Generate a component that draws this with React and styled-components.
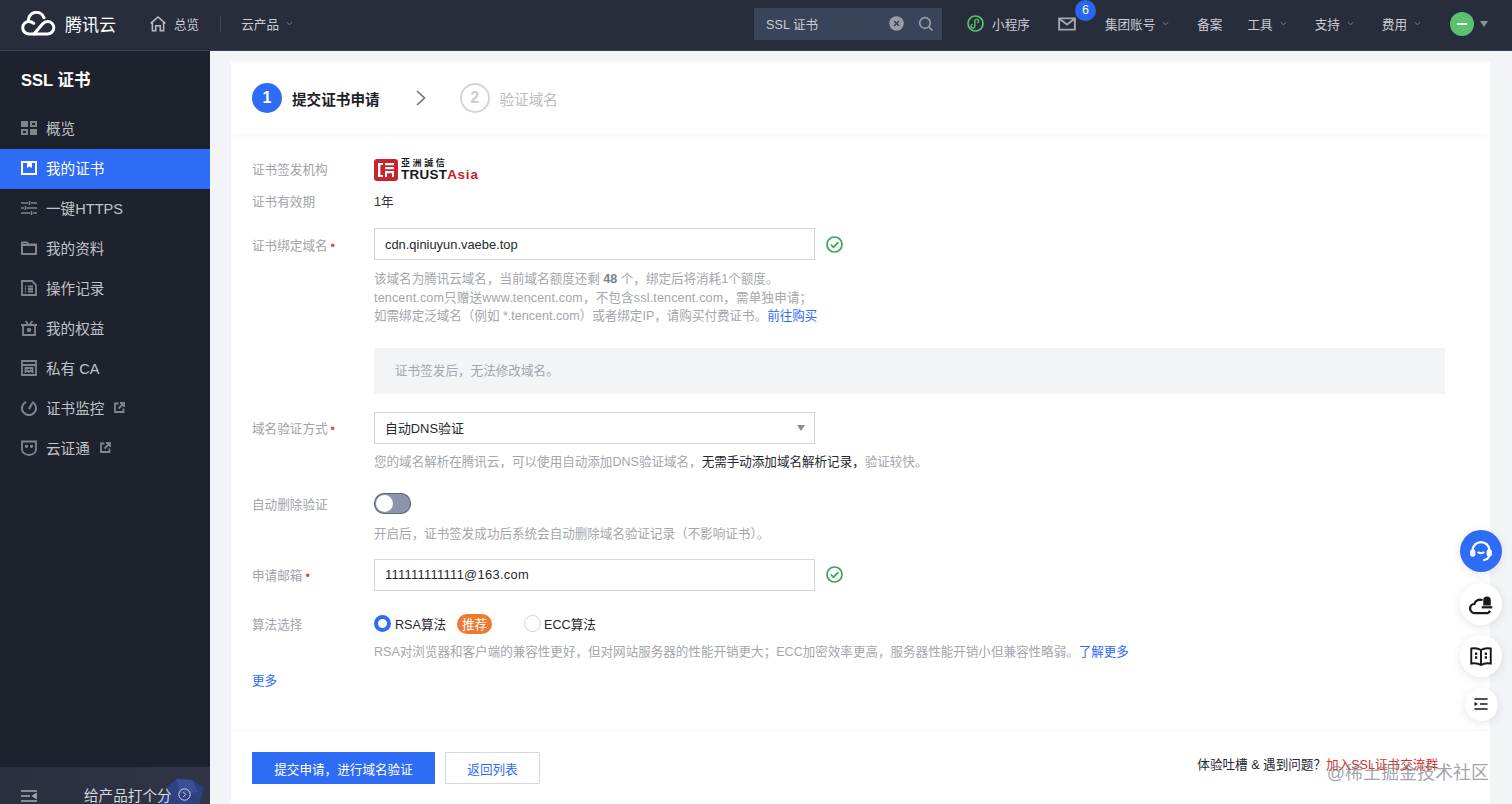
import styled, { createGlobalStyle } from "styled-components";

const GlobalStyle = createGlobalStyle`
  html, body {
    margin: 0;
    height: 100%;
    overflow: hidden;
    font-family: "Liberation Sans", "Noto Sans CJK SC", sans-serif;
  }
  * { box-sizing: border-box; }
`;

const Page = styled.div`
  width: 100%;
  height: 100vh;
  display: flex;
  flex-direction: column;
  overflow: hidden;
  background: #f3f4f7;
`;

/* top bar */
const TopBar = styled.header`
  flex: none;
  height: 51px;
  padding-bottom: 3px;
  display: flex;
  align-items: center;
  padding-left: 21px;
  background: #282d3b;
  border-bottom: 1px solid #3b4050;
  color: #c9ccd2;
  font-size: 12.6px;
`;

const Brand = styled.div`
  display: flex;
  align-items: center;
  gap: 9px;
  width: 128px;
  color: #fff;
  font-size: 17px;
`;

const NavItem = styled.div`
  display: flex;
  align-items: center;
  flex: none;
  gap: ${(p) => p.$gap ?? 7}px;
  margin-left: ${(p) => p.$left ?? 0}px;
  white-space: nowrap;
`;

const NavDivider = styled.span`
  width: 1px;
  height: 16px;
  margin-left: 21px;
  background: #454a58;
`;

const NavRight = styled.div`
  display: flex;
  align-items: center;
  margin-left: auto;
  padding-right: 24px;
`;

const SearchBox = styled.div`
  width: 188px;
  height: 32px;
  display: flex;
  align-items: center;
  padding: 0 8px 0 12px;
  background: #39435a;
  color: #c9ccd2;
  span { flex: 1; }
  svg + svg { margin-left: 14px; }
`;

const MailWrap = styled.div`
  position: relative;
  display: flex;
  margin-left: 28px;
`;

const Badge = styled.span`
  position: absolute;
  left: 17px;
  top: -15px;
  width: 21px;
  height: 21px;
  border-radius: 50%;
  display: flex;
  align-items: center;
  justify-content: center;
  background: #2a67ee;
  color: #fff;
  font-size: 12.5px;
`;

const Avatar = styled.span`
  width: 24px;
  height: 24px;
  border-radius: 50%;
  display: flex;
  align-items: center;
  justify-content: center;
  background: #5cc16f;
  &::before {
    content: "";
    width: 10px;
    height: 2px;
    background: #fff;
  }
`;

const Triangle = styled.span`
  width: 0;
  height: 0;
  border-left: 4px solid transparent;
  border-right: 4px solid transparent;
  border-top: 6px solid ${(p) => p.$color ?? "#8a8f9a"};
`;

const Body = styled.div`
  flex: 1;
  min-height: 0;
  display: flex;
`;

/* left menu */
const Sidebar = styled.aside`
  flex: none;
  width: 210px;
  display: flex;
  flex-direction: column;
  background: #1e222d;
`;

const SideTitle = styled.div`
  height: 58px;
  padding: 16px 0 0 21px;
  color: #fff;
  font-size: 16.5px;
  font-weight: 700;
`;

const SideItem = styled.div`
  height: 40px;
  display: flex;
  align-items: center;
  gap: 9px;
  padding: 0 0 3px 21px;
  font-size: 14.6px;
  color: ${(p) => (p.$active ? "#fff" : "#c1c4ca")};
  background: ${(p) => (p.$active ? "#2f6cf6" : "transparent")};
  svg:first-child {
    flex: none;
    color: ${(p) => (p.$active ? "#fff" : "#80848d")};
  }
`;

const ExternalMark = styled.span`
  display: flex;
  margin-left: 1px;
  color: #80848d;
`;

const SideFooter = styled.div`
  position: relative;
  margin-top: auto;
  height: 37px;
  display: flex;
  align-items: flex-end;
  gap: 47px;
  padding: 0 0 0 21px;
  color: #d7d9de;
  font-size: 14.6px;
  background: linear-gradient(90deg, #2a3040, #2f3546);
  overflow: hidden;
`;

const FooterArt = styled.svg`
  position: absolute;
  right: 4px;
  top: 0;
`;

const FooterText = styled.div`
  position: relative;
  display: flex;
  align-items: center;
  gap: 6px;
  white-space: nowrap;
  margin-bottom: -1px;
`;

/* content */
const Main = styled.main`
  flex: 1;
  min-width: 0;
  padding: 11px 22px 0 21px;
`;

const Card = styled.section`
  position: relative;
  height: 100%;
  background: #fff;
  overflow: hidden;
`;

const Steps = styled.div`
  height: 72px;
  display: flex;
  align-items: center;
  padding-left: 21px;
  box-shadow: 0 2px 3px rgba(30, 40, 60, 0.04);
`;

const StepNum = styled.span`
  width: 30px;
  height: 30px;
  border-radius: 50%;
  display: flex;
  align-items: center;
  justify-content: center;
  font-size: 16px;
  font-weight: 700;
  color: ${(p) => (p.$on ? "#fff" : "#c8cbd0")};
  background: ${(p) => (p.$on ? "#2f6cf6" : "#fff")};
  border: ${(p) => (p.$on ? "none" : "2px solid #d3d5d9")};
`;

const StepLabel = styled.span`
  margin-left: 10px;
  font-size: 14.6px;
  font-weight: ${(p) => (p.$on ? 700 : 400)};
  color: ${(p) => (p.$on ? "#1d2025" : "#b9bcc2")};
`;

const StepArrow = styled.svg`
  margin: 0 33px 0 35px;
`;

const Form = styled.div`
  padding: 0 45px 0 21px;
`;

const Row = styled.div`
  display: flex;
  align-items: ${(p) => p.$align ?? "center"};
  margin-top: ${(p) => p.$top ?? 0}px;
`;

const Label = styled.div`
  flex: none;
  width: 122px;
  font-size: 12.6px;
  color: #a0a3a9;
  em {
    margin-left: 3px;
    font-style: normal;
    color: #e54545;
  }
`;

const Value = styled.div`
  font-size: 12.6px;
  color: #30343b;
`;

const Trust = styled.div`
  display: flex;
  align-items: center;
  gap: 3px;
  padding-top: 4px;
`;

const TrustText = styled.div`
  display: flex;
  flex-direction: column;
  line-height: 1;
  color: #16181c;
  span:first-child {
    font-size: 9px;
    font-weight: 700;
    letter-spacing: 2.6px;
    margin-bottom: 0;
  }
  span:last-child {
    font-size: 13.4px;
    font-weight: 700;
    letter-spacing: 0.3px;
    white-space: nowrap;
  }
  b {
    color: #cc2027;
    letter-spacing: 0.8px;
  }
`;

const Field = styled.div`
  width: 441px;
  height: 32px;
  display: flex;
  align-items: center;
  justify-content: space-between;
  padding: 0 9px 0 10px;
  border: 1px solid #d6d8dc;
  font-size: 12.9px;
  letter-spacing: ${(p) => p.$track ?? 0}px;
  color: #25282e;
  background: #fff;
`;

const FieldCheck = styled.svg`
  margin-left: 11px;
`;

const Help = styled.div`
  margin: ${(p) => p.$top ?? 10}px 0 0 122px;
  font-size: 12.56px;
  line-height: 18.5px;
  color: #a3a6ac;
  white-space: nowrap;
  b {
    font-weight: 700;
    color: #7b7f87;
  }
  strong {
    font-weight: 400;
    color: #25282e;
  }
  a {
    color: #2f6cf6;
  }
`;

const WideLine = styled.span`
  letter-spacing: 0.16px;
`;

const Notice = styled.div`
  height: 46px;
  margin: 22px 0 0 122px;
  display: flex;
  align-items: center;
  padding: 0 0 2px 21px;
  font-size: 12.6px;
  color: #a3a6ac;
  background: #f2f4f6;
`;

const Toggle = styled.span`
  width: 37px;
  height: 21px;
  padding: 2px;
  border-radius: 11px;
  display: flex;
  background: #8b94a8;
  box-shadow: inset 0 0 0 1px #5f6778;
  &::before {
    content: "";
    width: 17px;
    height: 17px;
    border-radius: 50%;
    background: #fff;
  }
`;

const RadioGroup = styled.div`
  display: flex;
  align-items: center;
  font-size: 12.6px;
  color: #25282e;
`;

const Radio = styled.span`
  width: 17px;
  height: 17px;
  border-radius: 50%;
  margin: 0 ${(p) => (p.$on ? 4 : 3)}px 0 ${(p) => p.$left ?? 0}px;
  background: #fff;
  border: ${(p) => (p.$on ? "4px solid #2f6cf6" : "1px solid #d0d2d6")};
`;

const Recommend = styled.span`
  width: 35px;
  height: 20px;
  margin-left: 11px;
  border-radius: 10px;
  display: flex;
  align-items: center;
  justify-content: center;
  font-size: 12.6px;
  color: #fff;
  background: #ed7a2f;
`;

const MoreLink = styled.a`
  display: block;
  margin-top: 9px;
  font-size: 12.6px;
  color: #2f6cf6;
`;

const Actions = styled.div`
  display: flex;
  align-items: center;
  margin-top: 41px;
  padding: 21px 52px 0 21px;
  border-top: 1px solid #f5f6f8;
`;

const Button = styled.button`
  height: 32px;
  width: ${(p) => p.$width}px;
  margin-right: 10px;
  font-family: inherit;
  font-size: 12.6px;
  color: ${(p) => (p.$primary ? "#fff" : "#2f6cf6")};
  background: ${(p) => (p.$primary ? "#2f6cf6" : "#fff")};
  border: 1px solid ${(p) => (p.$primary ? "#2f6cf6" : "#d6d8dc")};
`;

const Feedback = styled.div`
  margin: 0 0 10px auto;
  font-size: 12.6px;
  color: #25282e;
  a {
    color: #d8322c;
  }
`;

const Watermark = styled.div`
  position: absolute;
  right: 1px;
  bottom: 20px;
  font-size: 18px;
  color: rgba(120, 124, 132, 0.7);
  white-space: nowrap;
`;

const FloatBar = styled.div`
  position: fixed;
  top: 530px;
  right: 10px;
  width: 42px;
  display: flex;
  flex-direction: column;
  align-items: center;
  gap: 10.5px;
`;

const FloatButton = styled.button`
  width: ${(p) => p.$size ?? 42}px;
  height: ${(p) => p.$size ?? 42}px;
  padding: 0;
  border: 0;
  border-radius: 50%;
  display: flex;
  align-items: center;
  justify-content: center;
  color: ${(p) => (p.$primary ? "#fff" : "#15181d")};
  background: ${(p) => (p.$primary ? "#2f6cf6" : "#fff")};
  box-shadow: 0 2px 10px rgba(40, 50, 70, 0.12);
`;

/* icons */
const Svg = ({ size = 16, sw = 1.6, children, ...rest }) => (
  <svg
    width={size}
    height={size}
    viewBox="0 0 16 16"
    fill="none"
    stroke="currentColor"
    strokeWidth={sw}
    {...rest}
  >
    {children}
  </svg>
);

const CloudLogo = () => (
  <svg width="35" height="25" viewBox="0 0 35 25" fill="none" stroke="#fff" strokeWidth="3" strokeLinecap="round">
    <path d="M7.500 10.600A8 8 0 0 1 23 6.800" />
    <path d="M13 23H8a6.300 6.300 0 0 1 0-12.600c2 0 3.400.7 4.800 1.900" />
    <path d="M13 23l8.500-10c1.300-1.500 2.700-2.600 5-2.600a6.300 6.300 0 0 1 0 12.600H13" strokeLinejoin="round" />
  </svg>
);

const Caret = () => (
  <Svg size={7} sw={2} style={{ color: "#8a8f9a" }}>
    <path d="M2 5l6 6 6-6" />
  </Svg>
);

const HomeIcon = () => (
  <Svg size={18} sw={1.4} style={{ color: "#b9bcc3" }}>
    <path d="M1.500 7.500L8 1.800l6.500 5.700M3 6.500V14h3V9.500h4V14h3V6.500" />
  </Svg>
);

const MiniIcon = () => (
  <svg width="17" height="17" viewBox="0 0 17 17" fill="none" stroke="#5cc16f" strokeWidth="1.700">
    <circle cx="8.500" cy="8.500" r="7.500" />
    <path d="M5 9.500a1.900 1.900 0 1 0 2.800 1.700V6a1.900 1.900 0 1 1 2.800 1.700" strokeLinecap="round" strokeWidth="1.400" />
  </svg>
);

const ClearIcon = () => (
  <svg width="15" height="15" viewBox="0 0 15 15">
    <circle cx="7.500" cy="7.500" r="7.300" fill="#9a9da3" />
    <path d="M5 5l5 5M10 5l-5 5" stroke="#39435a" strokeWidth="1.600" />
  </svg>
);

const SearchIcon = () => (
  <Svg size={16} sw={1.700} style={{ color: "#9a9da3" }}>
    <circle cx="7" cy="7" r="5.300" />
    <path d="M11 11l3.500 3.500" />
  </Svg>
);

const MailIcon = () => (
  <Svg size={18} sw={1.700} style={{ color: "#a4a7ae" }}>
    <path d="M1 3h14v10H1zM1.500 3.500L8 8.500l6.500-5" />
  </Svg>
);

const OverviewIcon = () => (
  <svg width="16" height="16" viewBox="0 0 16 16" fill="currentColor">
    <path d="M0 1h7v6H0zM9 1h7v6H9zM0 9h7v6H0zM9 9h7v6H9z" />
    <path d="M11 3h3v2h-3zM2 11h3v2H2z" fill="#1e222d" />
  </svg>
);

const CertIcon = () => (
  <svg width="16" height="16" viewBox="0 0 16 16" fill="currentColor">
    <path fillRule="evenodd" d="M0 1h16v14H0zM2 3v10h12V3h-3v5L8.500 6.500 6 8V3z" />
  </svg>
);

const SlidersIcon = () => (
  <Svg>
    <path d="M0 3h7M10 3h6M8.500 1v4M0 8h3M6 8h10M4.500 6v4M0 13h9M12 13h4M10.500 11v4" />
  </Svg>
);

const FolderIcon = () => (
  <Svg sw={2}>
    <path d="M1 2.500h5l1.500 2H15V14H1zM1 5h14" />
  </Svg>
);

const LogIcon = () => (
  <Svg sw={1.800}>
    <path d="M1 1h10l4 4v10H1zM4 6.500h1M7 6.500h5M4 9h1M7 9h5M4 11.500h1M7 11.500h5" />
  </Svg>
);

const GiftIcon = () => (
  <Svg sw={1.800}>
    <path d="M2 6v9h12V6M0 5h16M4.500 1L7 4M11.500 1L9 4" />
    <circle cx="8" cy="10" r="1.300" fill="currentColor" />
  </Svg>
);

const CaIcon = () => (
  <Svg sw={1.800}>
    <path d="M1 1h14v14H1zM1 5h14M4.500 12V8h7v4l-2-1.500L8 12l-1.500-1.500z" />
  </Svg>
);

const GaugeIcon = () => (
  <Svg sw={2}>
    <path d="M5 1.800a7 7 0 1 0 6 0" />
    <path d="M11 3.500L8 9" />
  </Svg>
);

const ShieldIcon = () => (
  <Svg sw={1.800}>
    <path d="M1 1.500h14v8a7 5.500 0 0 1-14 0zM4 6h3M9 6h3M5.500 6v2M10.500 6v2" />
  </Svg>
);

const External = () => (
  <ExternalMark>
    <svg width="11" height="11" viewBox="0 0 11 11" fill="none" stroke="currentColor" strokeWidth="1.800">
      <path d="M9.500 6.500v3.500h-8.500v-8.500h3.500M4.500 6.500L10 1M6 1h4v4" />
    </svg>
  </ExternalMark>
);

const CheckCircle = () => (
  <FieldCheck width="17" height="17" viewBox="0 0 17 17" fill="none" stroke="#34a853" strokeWidth="1.700">
    <circle cx="8.500" cy="8.500" r="7.500" />
    <path d="M4.800 8.500l2.700 2.700 4.800-5" />
  </FieldCheck>
);

const MENU = [
  { label: "概览", Icon: OverviewIcon },
  { label: "我的证书", Icon: CertIcon, active: true },
  { label: "一键HTTPS", Icon: SlidersIcon },
  { label: "我的资料", Icon: FolderIcon },
  { label: "操作记录", Icon: LogIcon },
  { label: "我的权益", Icon: GiftIcon },
  { label: "私有 CA", Icon: CaIcon },
  { label: "证书监控", Icon: GaugeIcon, external: true },
  { label: "云证通", Icon: ShieldIcon, external: true },
];

export default function App() {
  return (
    <Page>
      <GlobalStyle />
      <TopBar>
        <Brand>
          <CloudLogo />
          腾讯云
        </Brand>
        <NavItem $gap={7}>
          <HomeIcon />
          总览
        </NavItem>
        <NavDivider />
        <NavItem $left={20}>
          云产品 <Caret />
        </NavItem>
        <NavRight>
          <SearchBox>
            <span>SSL 证书</span>
            <ClearIcon />
            <SearchIcon />
          </SearchBox>
          <NavItem $left={25} $gap={8}>
            <MiniIcon />
            小程序
          </NavItem>
          <MailWrap>
            <MailIcon />
            <Badge>6</Badge>
          </MailWrap>
          <NavItem $left={29}>
            集团账号 <Caret />
          </NavItem>
          <NavItem $left={28}>备案</NavItem>
          <NavItem $left={25}>
            工具 <Caret />
          </NavItem>
          <NavItem $left={28}>
            支持 <Caret />
          </NavItem>
          <NavItem $left={28}>
            费用 <Caret />
          </NavItem>
          <NavItem $left={29} $gap={6}>
            <Avatar />
            <Triangle />
          </NavItem>
        </NavRight>
      </TopBar>

      <Body>
        <Sidebar>
          <SideTitle>SSL 证书</SideTitle>
          {MENU.map(({ label, Icon, active, external }) => (
            <SideItem key={label} $active={active}>
              <Icon />
              {label}
              {external && <External />}
            </SideItem>
          ))}
          <SideFooter>
            <FooterArt width="50" height="37" viewBox="0 0 50 37">
              <path d="M4 37l8-18 10-8 14 2 12 8-5 16z" fill="#2e4180" />
              <path d="M20 12l16 1 6 12-18 2z" fill="#3a5096" />
            </FooterArt>
            <Svg size={16} sw={1.600} style={{ color: "#a7abb3", flex: "none" }}>
              <path d="M0 3h16M0 8h9M0 13h16M15 6l-3 2 3 2z" />
            </Svg>
            <FooterText>
              给产品打个分
              <Svg size={13} sw={1.200}>
                <circle cx="8" cy="8" r="7" />
                <path d="M6.500 5l3 3-3 3" />
              </Svg>
            </FooterText>
          </SideFooter>
        </Sidebar>

        <Main>
          <Card>
            <Steps>
              <StepNum $on>1</StepNum>
              <StepLabel $on>提交证书申请</StepLabel>
              <StepArrow width="12" height="16" viewBox="0 0 12 16" fill="none" stroke="#70747c" strokeWidth="1.700">
                <path d="M2 1l7.500 7L2 15" />
              </StepArrow>
              <StepNum>2</StepNum>
              <StepLabel>验证域名</StepLabel>
            </Steps>

            <Form>
              <Row $top={21}>
                <Label>证书签发机构</Label>
                <Trust>
                  <svg width="24" height="22" viewBox="0 0 24 22">
                    <rect width="24" height="22" rx="3" fill="#c5252b" />
                    <path d="M11 4h9v2.200h-9zM11 8h9v2.200h-9zM11 12h9v6h-2v-3.800h-5V18h-2zM4 4h2.400v14H4zM6 4h3v2H6zM6 16h3v2H6z" fill="#fff" />
                  </svg>
                  <TrustText>
                    <span>亞洲誠信</span>
                    <span>
                      TRUST<b>Asia</b>
                    </span>
                  </TrustText>
                </Trust>
              </Row>
              <Row $top={10}>
                <Label>证书有效期</Label>
                <Value>1年</Value>
              </Row>
              <Row $top={18}>
                <Label>
                  证书绑定域名<em>•</em>
                </Label>
                <Field>cdn.qiniuyun.vaebe.top</Field>
                <CheckCircle />
              </Row>
              <Help>
                该域名为腾讯云域名，当前域名额度还剩 <b>48</b> 个，绑定后将消耗1个额度。
                <br />
                <WideLine>tencent.com只赠送www.tencent.com，不包含ssl.tencent.com，需单独申请；</WideLine>
                <br />
                如需绑定泛域名（例如 *.tencent.com）或者绑定IP，请购买付费证书。<a>前往购买</a>
              </Help>
              <Notice>证书签发后，无法修改域名。</Notice>
              <Row $top={18}>
                <Label>
                  域名验证方式<em>•</em>
                </Label>
                <Field>
                  自动DNS验证
                  <Triangle />
                </Field>
              </Row>
              <Help $top={9}>
                您的域名解析在腾讯云，可以使用自动添加DNS验证域名，<strong>无需手动添加域名解析记录，</strong>验证较快。
              </Help>
              <Row $top={22}>
                <Label>自动删除验证</Label>
                <Toggle />
              </Row>
              <Help $top={11}>开启后，证书签发成功后系统会自动删除域名验证记录（不影响证书）。</Help>
              <Row $top={15}>
                <Label>
                  申请邮箱<em>•</em>
                </Label>
                <Field $track={0.3}>111111111111@163.com</Field>
                <CheckCircle />
              </Row>
              <Row $top={23} $align="flex-start">
                <Label>算法选择</Label>
                <RadioGroup>
                  <Radio $on />
                  RSA算法
                  <Recommend>推荐</Recommend>
                  <Radio $left={32} />
                  ECC算法
                </RadioGroup>
              </Row>
              <Help $top={9}>
                RSA对浏览器和客户端的兼容性更好，但对网站服务器的性能开销更大；ECC加密效率更高，服务器性能开销小但兼容性略弱。<a>了解更多</a>
              </Help>
              <MoreLink>更多</MoreLink>
            </Form>

            <Actions>
              <Button $primary $width={183}>
                提交申请，进行域名验证
              </Button>
              <Button $width={95}>返回列表</Button>
              <Feedback>
                体验吐槽 &amp; 遇到问题？<a>加入SSL证书交流群</a>
              </Feedback>
            </Actions>
            <Watermark>@稀土掘金技术社区</Watermark>
          </Card>
        </Main>
      </Body>

      <FloatBar>
        <FloatButton $primary>
          <Svg size={24} sw={1.500}>
            <path d="M2.500 9V7.500a5.500 5.500 0 0 1 11 0V9M13.500 10.500c0 2-1.500 3.500-4 3.500" />
            <rect x="1.500" y="7.500" width="2" height="3.500" rx="1" fill="currentColor" />
            <rect x="12.500" y="7.500" width="2" height="3.500" rx="1" fill="currentColor" />
            <path d="M6 8.500c.8 1.300 3.200 1.300 4 0" />
          </Svg>
        </FloatButton>
        <FloatButton>
          <Svg size={24} sw={1.500}>
            <path d="M9 5.500A4 4 0 0 0 3.500 8 3 3 0 0 0 4 14h8.500a2.500 2.500 0 0 0 1.500-1.500" />
            <path d="M9.500 9V5.500a2.500 2.500 0 0 1 5 0V9z" fill="currentColor" stroke="none" />
            <path d="M8.500 10.200h7" />
          </Svg>
        </FloatButton>
        <FloatButton>
          <Svg size={24} sw={1.300}>
            <path d="M8 4C6.500 3 4 2.500 1.500 3v10c2.500-.5 5 0 6.500 1 1.500-1 4-1.500 6.500-1V3C12 2.500 9.500 3 8 4zM8 4v10" />
            <path d="M4 6.500h1.500M10.500 6.500H12M4 9h1.500M10.500 9H12" strokeWidth="1.800" />
          </Svg>
        </FloatButton>
        <FloatButton $size={33}>
          <Svg size={16} sw={1.400}>
            <path d="M1.500 3h13M7 8h7.500M1.500 13h13" />
            <path d="M1.500 6l3.500 2-3.500 2z" fill="currentColor" stroke="none" />
          </Svg>
        </FloatButton>
      </FloatBar>
    </Page>
  );
}
